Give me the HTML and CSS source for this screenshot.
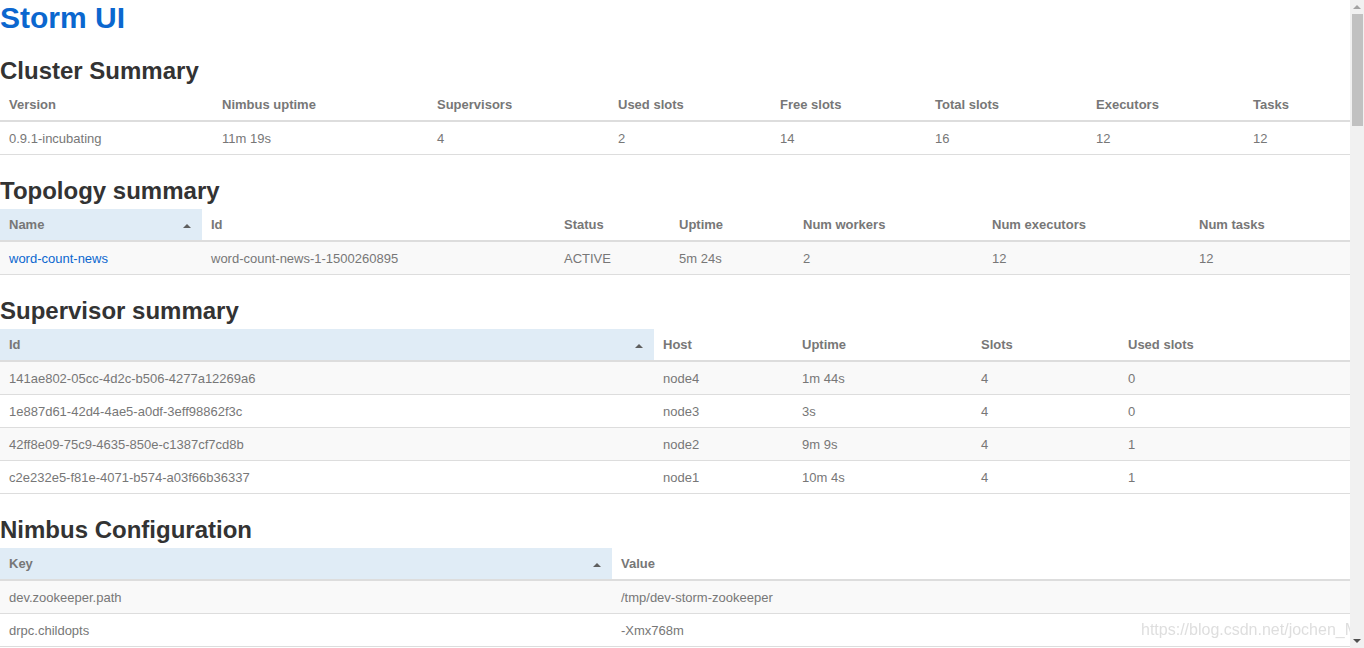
FILE: index.html
```html
<!DOCTYPE html>
<html>
<head>
<meta charset="utf-8">
<title>Storm UI</title>
<link rel="stylesheet" href="styles.css">
</head>
<body>
<div class="page">
  <h1 class="title"><a href="#">Storm UI</a></h1>

  <h2>Cluster Summary</h2>
  <table class="grid t-cluster">
    <colgroup><col class="c1"><col class="c2"><col class="c3"><col class="c4"><col class="c5"><col class="c6"><col class="c7"><col class="c8"></colgroup>
    <thead><tr><th>Version</th><th>Nimbus uptime</th><th>Supervisors</th><th>Used slots</th><th>Free slots</th><th>Total slots</th><th>Executors</th><th>Tasks</th></tr></thead>
    <tbody><tr class="plain"><td>0.9.1-incubating</td><td>11m 19s</td><td>4</td><td>2</td><td>14</td><td>16</td><td>12</td><td>12</td></tr></tbody>
  </table>

  <h2>Topology summary</h2>
  <table class="grid t-topo">
    <colgroup><col class="c1"><col class="c2"><col class="c3"><col class="c4"><col class="c5"><col class="c6"><col class="c7"></colgroup>
    <thead><tr><th class="sorted">Name</th><th>Id</th><th>Status</th><th>Uptime</th><th>Num workers</th><th>Num executors</th><th>Num tasks</th></tr></thead>
    <tbody><tr><td><a href="#">word-count-news</a></td><td>word-count-news-1-1500260895</td><td>ACTIVE</td><td>5m 24s</td><td>2</td><td>12</td><td>12</td></tr></tbody>
  </table>

  <h2>Supervisor summary</h2>
  <table class="grid t-sup">
    <colgroup><col class="c1"><col class="c2"><col class="c3"><col class="c4"><col class="c5"></colgroup>
    <thead><tr><th class="sorted">Id</th><th>Host</th><th>Uptime</th><th>Slots</th><th>Used slots</th></tr></thead>
    <tbody>
      <tr><td>141ae802-05cc-4d2c-b506-4277a12269a6</td><td>node4</td><td>1m 44s</td><td>4</td><td>0</td></tr>
      <tr><td>1e887d61-42d4-4ae5-a0df-3eff98862f3c</td><td>node3</td><td>3s</td><td>4</td><td>0</td></tr>
      <tr><td>42ff8e09-75c9-4635-850e-c1387cf7cd8b</td><td>node2</td><td>9m 9s</td><td>4</td><td>1</td></tr>
      <tr><td>c2e232e5-f81e-4071-b574-a03f66b36337</td><td>node1</td><td>10m 4s</td><td>4</td><td>1</td></tr>
    </tbody>
  </table>

  <h2>Nimbus Configuration</h2>
  <table class="grid t-conf">
    <colgroup><col class="c1"><col class="c2"></colgroup>
    <thead><tr><th class="sorted">Key</th><th>Value</th></tr></thead>
    <tbody>
      <tr><td>dev.zookeeper.path</td><td>/tmp/dev-storm-zookeeper</td></tr>
      <tr><td>drpc.childopts</td><td>-Xmx768m</td></tr>
    </tbody>
  </table>
</div>

<div class="watermark">https://blog.csdn.net/jochen_M</div>

<div class="scrollbar">
  <div class="sb-up"></div>
  <div class="sb-track"><div class="sb-thumb"></div></div>
  <div class="sb-down"></div>
</div>
</body>
</html>
```

FILE: styles.css
```css
html, body {
  margin: 0;
  padding: 0;
  overflow: hidden;
  background: #fff;
}
body {
  font-family: "Liberation Sans", Arial, sans-serif;
  font-size: 13px;
  color: #777;
}
.page {
  width: 1350px;
}
.title {
  margin: 0;
  font-size: 30px;
  line-height: 35px;
  font-weight: bold;
}
.title a {
  color: #0b67cf;
  text-decoration: none;
}
h2 {
  margin: 23px 0 5px;
  font-size: 24px;
  line-height: 26px;
  font-weight: bold;
  color: #333;
}
.grid {
  width: 1350px;
  border-collapse: collapse;
  border-spacing: 0;
  table-layout: fixed;
}
.grid th {
  text-align: left;
  font-weight: bold;
  line-height: 18px;
  padding: 7px 8px 6px 9px;
  border-bottom: 2px solid #ddd;
  white-space: nowrap;
}
.grid th.sorted {
  background: #e0ecf6;
  position: relative;
}
.grid th.sorted::after {
  content: "";
  position: absolute;
  right: 11px;
  top: 15px;
  border-left: 4px solid transparent;
  border-right: 4px solid transparent;
  border-bottom: 4px solid #5f5f5f;
}
.grid td {
  line-height: 18px;
  padding: 8px 8px 6px 9px;
  border-bottom: 1px solid #ddd;
  white-space: nowrap;
}
.grid tbody tr:nth-child(odd) td {
  background: #f9f9f9;
}
.grid tbody tr.plain td {
  background: #fff;
}
.grid a {
  color: #0b67cf;
  text-decoration: none;
}

.t-cluster .c1 { width: 213px; }
.t-cluster .c2 { width: 215px; }
.t-cluster .c3 { width: 181px; }
.t-cluster .c4 { width: 162px; }
.t-cluster .c5 { width: 155px; }
.t-cluster .c6 { width: 161px; }
.t-cluster .c7 { width: 157px; }
.t-cluster .c8 { width: 106px; }

.t-topo .c1 { width: 202px; }
.t-topo .c2 { width: 353px; }
.t-topo .c3 { width: 115px; }
.t-topo .c4 { width: 124px; }
.t-topo .c5 { width: 189px; }
.t-topo .c6 { width: 207px; }
.t-topo .c7 { width: 160px; }

.t-sup .c1 { width: 654px; }
.t-sup .c2 { width: 139px; }
.t-sup .c3 { width: 179px; }
.t-sup .c4 { width: 147px; }
.t-sup .c5 { width: 231px; }

.t-conf .c1 { width: 612px; }
.t-conf .c2 { width: 738px; }

.watermark {
  position: fixed;
  left: 1141px;
  top: 620px;
  font-size: 16px;
  line-height: 20px;
  color: rgba(200, 200, 200, 0.6);
  white-space: nowrap;
}

.scrollbar {
  position: fixed;
  top: 0;
  right: 0;
  width: 14px;
  height: 648px;
  background: #f1f1f1;
  display: flex;
  flex-direction: column;
}
.sb-up, .sb-down {
  height: 14px;
  position: relative;
}
.sb-up::after {
  content: "";
  position: absolute;
  left: 3px;
  top: 5px;
  border-left: 4px solid transparent;
  border-right: 4px solid transparent;
  border-bottom: 4px solid #a3a3a3;
}
.sb-down::after {
  content: "";
  position: absolute;
  left: 3px;
  top: 5px;
  border-left: 4px solid transparent;
  border-right: 4px solid transparent;
  border-top: 4px solid #505050;
}
.sb-track {
  flex: 1;
  padding: 0 1px 0 2px;
}
.sb-thumb {
  height: 112px;
  background: #c1c1c1;
}
```
